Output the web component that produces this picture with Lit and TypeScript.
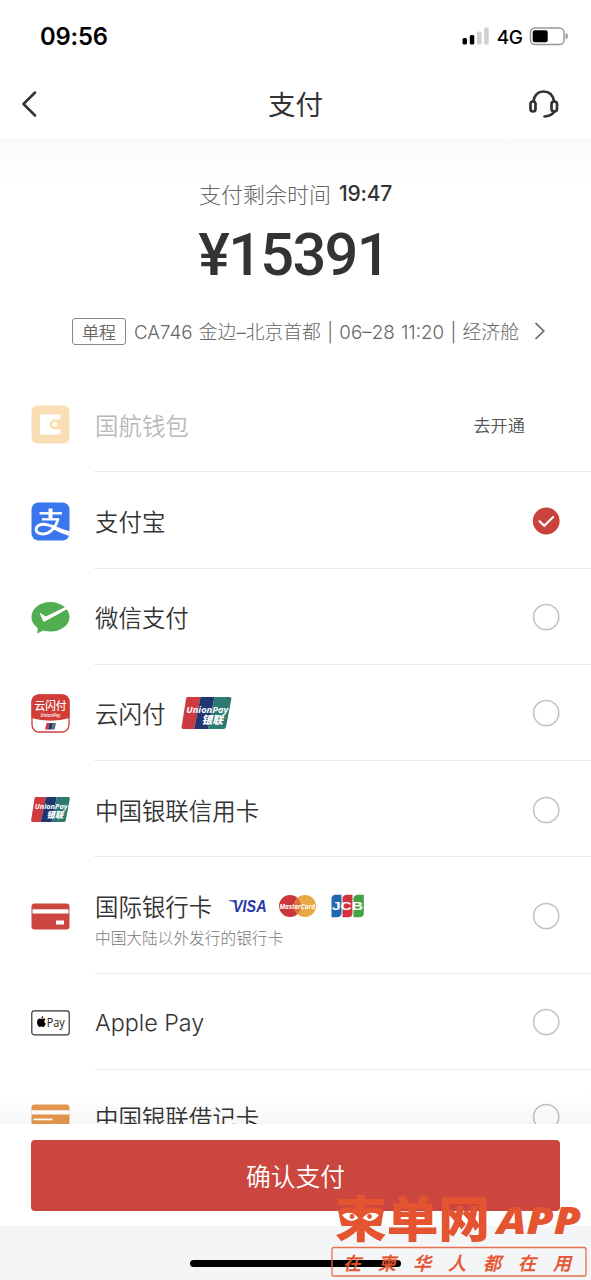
import { LitElement, html, css, svg, nothing } from "lit";
import { customElement, property } from "lit/decorators.js";

const unionPay = (w: number, h: number) => html`
  <svg width=${w} height=${h} viewBox="0 0 50 32">
    <path d="M6 0H19L12.5 32H2Q-.4 32 .2 29.5L4.5 2Q4.900 0 6 0Z" fill="#cf3a3e" />
    <path d="M19 0H33L26.500 32H12.500Z" fill="#21366f" />
    <path d="M33 0H48Q50.300 0 49.800 2.200L44.500 30Q44 32 42 32H26.500Z" fill="#2c7a71" />
    <text x="4.800" y="16" textLength="42" lengthAdjust="spacingAndGlyphs" class="up">UnionPay</text>
    <text x="20" y="27" textLength="21.500" lengthAdjust="spacingAndGlyphs" class="up cn">银联</text>
  </svg>`;

const icons: Record<string, unknown> = {
  wallet: html`<svg width="39" height="39" viewBox="0 0 39 39">
    <rect x=".5" y=".5" width="38" height="38" rx="6" fill="#f9dfb3" />
    <path d="M9 9.500H29.500V29.500H9Z" fill="#fff" />
    <path d="M30 14.300H23.500A5 5 0 0 0 23.500 24.300H30Z" fill="#f9dfb3" />
    <circle cx="23.900" cy="19.300" r="2.500" fill="#fffaf0" />
  </svg>`,
  alipay: html`<svg width="39" height="39" viewBox="0 0 39 39">
    <rect x=".5" y=".5" width="38" height="38" rx="7" fill="#3a76ee" />
    <g fill="none" stroke="#fff">
      <path d="M19.500 6.500V16.500" stroke-width="4" />
      <path d="M8.500 11.300H31" stroke-width="2.400" />
      <path d="M11 17.300H27.500" stroke-width="2.300" />
      <path d="M27.300 16.500C25.500 23.500 20.500 31.500 12 32C2.500 32 3.200 23 11.500 22.300C18.500 21.700 27.500 27.500 38.500 31" stroke-width="2.900" />
    </g>
    <path d="M22 24.500C28 26.500 33 28.300 38.500 29V34C33 32.500 26 29 20.500 26.500Z" fill="#fff" />
  </svg>`,
  wechat: html`<svg width="39" height="33" viewBox="0 0 39 33">
    <path d="M19.500 1C9 1 .5 7.500 .5 16C.5 20.500 3 24.300 6.800 27L6.300 32.500L12.200 29.500Q15.500 30.600 19.500 30.600C30 30.600 38.500 24 38.500 16C38.500 8 30 1 19.500 1Z" fill="#50ad50" />
    <path d="M34.300 6L15.800 14.900Q14.600 15.500 13.500 14.800L9.800 12.300Q8.600 11.700 9 13L11.900 19.700Q12.700 21.100 14.200 20.200L36.300 7.900Z" fill="#fff" />
  </svg>`,
  quickpass: html`<svg width="39" height="39" viewBox="0 0 39 39">
    <rect x="1" y="1" width="37" height="37" rx="7" fill="#fff" stroke="#cf3d38" stroke-width="1.300" />
    <path d="M.5 24V8Q.5 .5 8 .5H31Q38.500 .5 38.500 8V24Q19.500 29.500 .5 24Z" fill="#d13c37" />
    <text x="3.500" y="15.800" textLength="32" lengthAdjust="spacingAndGlyphs" class="qp">云闪付</text>
    <text x="9.500" y="22.500" textLength="20" lengthAdjust="spacingAndGlyphs" class="qe">UnionPay</text>
    <path d="M15.500 29H18.500L17 35.500H14Z" fill="#cf3a3e" /><path d="M18.500 29H22L20.500 35.500H17Z" fill="#21366f" /><path d="M22 29H25L23.500 35.500H20.500Z" fill="#52716f" />
  </svg>`,
  union: unionPay(39, 25),
  card: html`<svg width="39" height="27" viewBox="0 0 39 27">
    <rect x=".5" y=".5" width="38" height="26" rx="3" fill="#ca463f" />
    <rect x="1.500" y="6.300" width="36" height="4.200" fill="#fff" /><rect x="25" y="17.500" width="8" height="4" fill="#fff" />
  </svg>`,
  apple: html`<svg width="39" height="26" viewBox="0 0 39 26">
    <rect x=".8" y=".8" width="37.400" height="24" rx="2.200" fill="#fff" stroke="#333" stroke-width="1.200" />
    <path d="M10.300 9.100C11 9.100 11.700 8.300 13 8.500Q14 8.600 14.500 9.400Q13.200 10.200 13.300 11.600Q13.400 13.100 14.800 13.700Q14.100 15.900 12.900 16.800C12 17.300 11.400 16.600 10.400 16.600S9 17.300 8.200 16.900C6.800 16 5.700 13.500 6.100 11.300C6.400 9.600 7.600 8.500 8.900 8.600Q9.700 8.700 10.300 9.100ZM10.300 8.400Q10.200 6.300 12.300 5.900Q12.300 8.100 10.300 8.400Z" />
    <text x="15.800" y="16.500" textLength="18" lengthAdjust="spacingAndGlyphs" class="ap">Pay</text>
  </svg>`,
  debit: html`<svg width="39" height="27" viewBox="0 0 39 27">
    <rect x=".5" y=".5" width="38" height="26" rx="3" fill="#e5974d" />
    <rect x=".5" y="6.200" width="38" height="4.300" fill="#fff" /><rect x="2.500" y="14.500" width="19" height="1.800" fill="#fff" />
  </svg>`,
};

const brands: Record<string, unknown> = {
  union: unionPay(51, 32),
  world: html`
    <svg width="136" height="24" viewBox="0 0 136 24">
      <text x="4" y="18.300" textLength="33.500" lengthAdjust="spacingAndGlyphs" class="visa">VISA</text>
      <path d="M0 6.300H7V9.500Q4.500 7.200 0 7Z" fill="#2636a5" />
      <circle cx="61" cy="12" r="11" fill="#cb383b" /><circle cx="76" cy="12" r="11" fill="#e9a846" />
      <path d="M68.500 4A11 11 0 0 1 68.500 20A11 11 0 0 1 68.500 4Z" fill="#da703c" />
      <text x="50.500" y="15" textLength="35.500" lengthAdjust="spacingAndGlyphs" class="mc">MasterCard</text>
      <path d="M106 .7H112.500V19Q112.500 23.300 107.500 23.300H102.500V5Q102.500 1 106 .7Z" fill="#2368ad" />
      <path d="M117.500 .7H123.500V19Q123.500 23.300 119 23.300H113.500V5Q113.500 1 117.500 .7Z" fill="#d23341" />
      <path d="M128.500 .7H134.800V19Q134.800 23.300 130 23.300H124.500V5Q124.500 1 128.500 .7Z" fill="#41a345" />
      <text x="103" y="16.300" textLength="31" lengthAdjust="spacingAndGlyphs" class="jcb">JCB</text>
    </svg>`,
};

@customElement("pay-row")
class PayRow extends LitElement {
  @property() icon = "";
  @property() label = "";
  @property() note = "";
  @property() brand = "";
  @property() state = "off";

  static styles = css`
    :host { display: block; padding-left: 31px; }
    .row { display: flex; height: 100%; box-sizing: border-box; }
    .icon { width: 39px; display: flex; align-items: center; padding-top: 1.500px; }
    .main { flex: 1; margin-left: 24px; border-bottom: 1px solid #ebebeb; display: flex; align-items: center; padding: 2px 31px 0 0; }
    .texts { flex: 1; padding-left: 1px; }
    .line { display: flex; align-items: center; height: 34px; }
    .label { font-size: 23.450px; line-height: 34px; color: #333; white-space: nowrap; font-weight: 350; }
    .latin { font: 350 23.300px/34px Inter, sans-serif; padding-top: 2px; }
    .dim .label { color: #b9b9b9; }
    .note { font-size: 15.700px; line-height: 20px; color: #777; font-weight: 300; margin-top: 5px; }
    .noted .line { margin-top: 5px; }
    .brand { display: flex; margin-left: 17px; }
    .pair { margin-left: 15.500px; }
    .open { font-size: 17.200px; font-weight: 350; color: #555; margin-right: 35px; }
    svg { display: block; overflow: visible; }
    .up { font: italic 700 9.500px "Open Sans", sans-serif; fill: #fff; }
    .cn { font: italic 900 11px "Noto Sans CJK SC", sans-serif; }
    .qp { font: 500 11px "Noto Sans CJK SC", sans-serif; fill: #fff; }
    .qe { font: italic 600 4.800px "Open Sans", sans-serif; fill: #fff; }
    .ap { font: 400 13px "Open Sans", sans-serif; fill: #222; }
    .visa { font: italic 700 16.500px "Liberation Sans", sans-serif; fill: #2636a5; }
    .mc { font: italic 700 7.500px "Open Sans", sans-serif; fill: #fff; }
    .jcb { font: 700 11.500px "Liberation Sans", sans-serif; fill: #fff; }
  `;

  mark() {
    if (this.state === "open") return html`<span class="open">去开通</span>`;
    return html`<svg width="28" height="28" viewBox="0 0 28 28">
      ${this.state === "on"
        ? svg`<circle cx="14.200" cy="14" r="13.400" fill="#ca423d"/><path d="M7.500 14.200L12.300 18.800L21.200 10" fill="none" stroke="#fff" stroke-width="2.100" stroke-linecap="round"/>`
        : svg`<circle cx="14.200" cy="14" r="12.600" fill="#fff" stroke="#bfc0c9" stroke-width="1.500"/>`}
    </svg>`;
  }

  render() {
    return html`<div class="row ${this.state === "open" ? "dim" : ""}">
      <div class="icon">${icons[this.icon]}</div>
      <div class="main">
        <div class="texts ${this.note ? "noted" : ""}">
          <div class="line">
            <span class="label ${this.icon === "apple" ? "latin" : ""}">${this.label}</span>
            ${this.brand ? html`<span class="brand ${this.brand === "union" ? "pair" : ""}">${brands[this.brand]}</span>` : nothing}
          </div>
          ${this.note ? html`<div class="note">${this.note}</div>` : nothing}
        </div>
        ${this.mark()}
      </div>
    </div>`;
  }
}

@customElement("app-root")
class AppRoot extends LitElement {
  static styles = css`
    :host { display: flex; flex-direction: column; position: relative; width: 591px; height: 1280px; overflow: hidden; background: #fff; color: #333; font-family: "Noto Sans CJK SC", sans-serif; }
    svg { display: block; }
    .status { height: 72px; display: flex; align-items: center; justify-content: space-between; padding: 0 22px 0 40px; box-sizing: border-box; color: #000; }
    .clock { font: 600 23.800px Inter, sans-serif; letter-spacing: -0.200px; }
    .signals { display: flex; align-items: center; }
    .net { font: 500 19px Inter, sans-serif; margin: 2px 6.500px 0 6.500px; letter-spacing: -0.500px; }
    .nav { height: 67px; display: grid; grid-template-columns: 60px 1fr 62px; align-items: center; }
    .title { text-align: center; font-size: 27.500px; line-height: 40px; margin-bottom: 5px; padding-left: 2px; }
    .back { padding-left: 21px; margin-bottom: 3px; }
    .headset { margin-bottom: 3px; }
    .summary { height: 237px; box-sizing: border-box; padding-top: 39px; background: linear-gradient(#f9f9f9, #fff 42px); display: flex; flex-direction: column; align-items: center; }
    .left { display: flex; align-items: center; height: 30px; font-size: 22px; font-weight: 300; color: #666; }
    .count { font: 500 21px Inter, sans-serif; color: #333; margin-left: 8px; padding-top: 1px; letter-spacing: -0.200px; }
    .price { font: 500 59.500px/70px Roboto, sans-serif; color: #333; margin-top: 11.500px; letter-spacing: -1.700px; padding-right: 4px; }
    .flight { display: flex; align-items: center; align-self: stretch; padding-left: 72px; margin-top: 27.500px; height: 28px; color: #666; font-size: 18.800px; font-weight: 300; white-space: nowrap; }
    .tag { border: 1.500px solid #888; border-radius: 3px; font-size: 17px; font-weight: 350; line-height: 25px; padding: 0 9px; color: #666; margin-right: 8px; }
    .info { font-family: Inter, "Noto Sans CJK SC", sans-serif; word-spacing: 1px; margin-top: -1px; }
    .arrow { margin-left: 15px; }
    .list { height: 748px; overflow: hidden; position: relative; }
    .list pay-row { height: 96.250px; }
    .list pay-row.tall { height: 116.500px; }
    .list pay-row:last-of-type { height: 93.500px; }
    .fade { position: absolute; left: 0; right: 0; bottom: 0; height: 32px; background: linear-gradient(rgba(0,0,0,0), rgba(0,0,0,0.030)); }
    .foot { height: 102px; box-sizing: border-box; padding: 16px 31px 15px; background: #fff; }
    .pay { height: 71px; border: 0; width: 100%; padding: 0; border-radius: 4px; background: #ca463f; color: #fff; font: 350 24.800px/69px "Noto Sans CJK SC", sans-serif; display: block; }
    .home { flex: 1; background: #f4f5f6; display: flex; justify-content: center; padding-top: 34px; }
    .bar { width: 211px; height: 7px; border-radius: 4px; background: #000; }
    .mark { position: absolute; left: 328px; top: 1190px; }
    .big { font: 900 49px "Noto Sans CJK SC", sans-serif; fill: #e45430; }
    .app { font: italic 800 37px "Open Sans", sans-serif; fill: #e45430; }
    .tagline { font: italic 500 18px "Noto Sans CJK SC", sans-serif; fill: #e45430; stroke: #e45430; stroke-width: 0.300; }
  `;

  render() {
    const rows = [
      ["wallet", "国航钱包", "open"],
      ["alipay", "支付宝", "on"],
      ["wechat", "微信支付", "off"],
      ["quickpass", "云闪付", "off", "union"],
      ["union", "中国银联信用卡", "off"],
      ["card", "国际银行卡", "off", "world", "中国大陆以外发行的银行卡"],
      ["apple", "Apple Pay", "off"],
      ["debit", "中国银联借记卡", "off"],
    ];
    return html`
      <div class="status">
        <span class="clock">09:56</span>
        <div class="signals">
          <svg width="28" height="18" viewBox="0 0 28 18">
            <rect x=".5" y="11" width="4.500" height="6.500" rx="1.500" /><rect x="7.800" y="8" width="4.500" height="9.500" rx="1.500" />
            <rect x="15" y="4.500" width="4.500" height="13" rx="1.500" fill="#d0d0d0" /><rect x="22.200" y="0.500" width="4.500" height="17" rx="1.500" fill="#d0d0d0" />
          </svg>
          <span class="net">4G</span>
          <svg width="40" height="19" viewBox="0 0 40 19">
            <rect x="1.500" y="1" width="33.500" height="16.500" rx="4.500" fill="#fff" stroke="#999" stroke-width="1.500" />
            <rect x="3.700" y="3.200" width="15" height="12" rx="2" /><path d="M36.500 6Q39 7 39 9.200T36.500 12.500Z" fill="#999" />
          </svg>
        </div>
      </div>
      <div class="nav">
        <svg class="back" width="18" height="28" viewBox="0 0 18 28"><path d="M14 2.500L2.500 14L14 25.500" fill="none" stroke="#333" stroke-width="2.500" stroke-linecap="round" stroke-linejoin="round" /></svg>
        <div class="title">支付</div>
        <svg class="headset" width="31" height="30" viewBox="0 0 31 30" fill="none" stroke="#333" stroke-width="2.700" stroke-linecap="round">
          <path d="M4.500 12.500C5.500 5.500 9.500 2.500 14.500 2.500S24 5.500 25 12.500" />
          <rect x="1.500" y="12.500" width="5" height="10" rx="2.500" /><rect x="22.500" y="12.500" width="5.500" height="10" rx="2.700" />
          <path d="M25 23C23 25.800 19.500 27.200 15.500 27.500" />
        </svg>
      </div>
      <div class="summary">
        <div class="left">支付剩余时间<span class="count">19:47</span></div>
        <div class="price">¥15391</div>
        <div class="flight">
          <span class="tag">单程</span>
          <span class="info">CA746 金边–北京首都 | 06–28 11:20 | 经济舱</span>
          <svg class="arrow" width="12" height="20" viewBox="0 0 12 20"><path d="M1.500 2L9.800 10L1.500 18" fill="none" stroke="#666" stroke-width="1.700" /></svg>
        </div>
      </div>
      <div class="list">
        ${rows.map(([i, l, s, b = "", n = ""]) => html`<pay-row class=${n ? "tall" : ""} .icon=${i} .label=${l} .state=${s} .brand=${b} .note=${n}></pay-row>`)}
        <div class="fade"></div>
      </div>
      <div class="foot"><button class="pay">确认支付</button></div>
      <div class="home"><div class="bar"></div></div>
      <svg class="mark" width="263" height="90" viewBox="0 0 263 90">
        <text x="7" y="47" class="big" textLength="155" lengthAdjust="spacingAndGlyphs">柬单网</text>
        <path d="M10 20H56L53 35H13Z" fill="#e45430" />
        <path d="M14 25Q23 19.500 30.500 28Q22 35 14 25ZM34.500 28Q42 19.500 51 25Q43 35 34.500 28Z" fill="#fff" />
        <circle cx="24" cy="26.500" r="2.400" fill="#e45430" /><circle cx="41.500" cy="26.500" r="2.400" fill="#e45430" />
        <text x="169" y="44" class="app" textLength="84" lengthAdjust="spacingAndGlyphs">APP</text>
        <rect x="4" y="57.500" width="254" height="28.500" rx="2" fill="none" stroke="#e7714f" stroke-width="1.300" />
        <text x="15" y="79.500" class="tagline" textLength="228">在柬华人都在用</text>
      </svg>
    `;
  }
}
